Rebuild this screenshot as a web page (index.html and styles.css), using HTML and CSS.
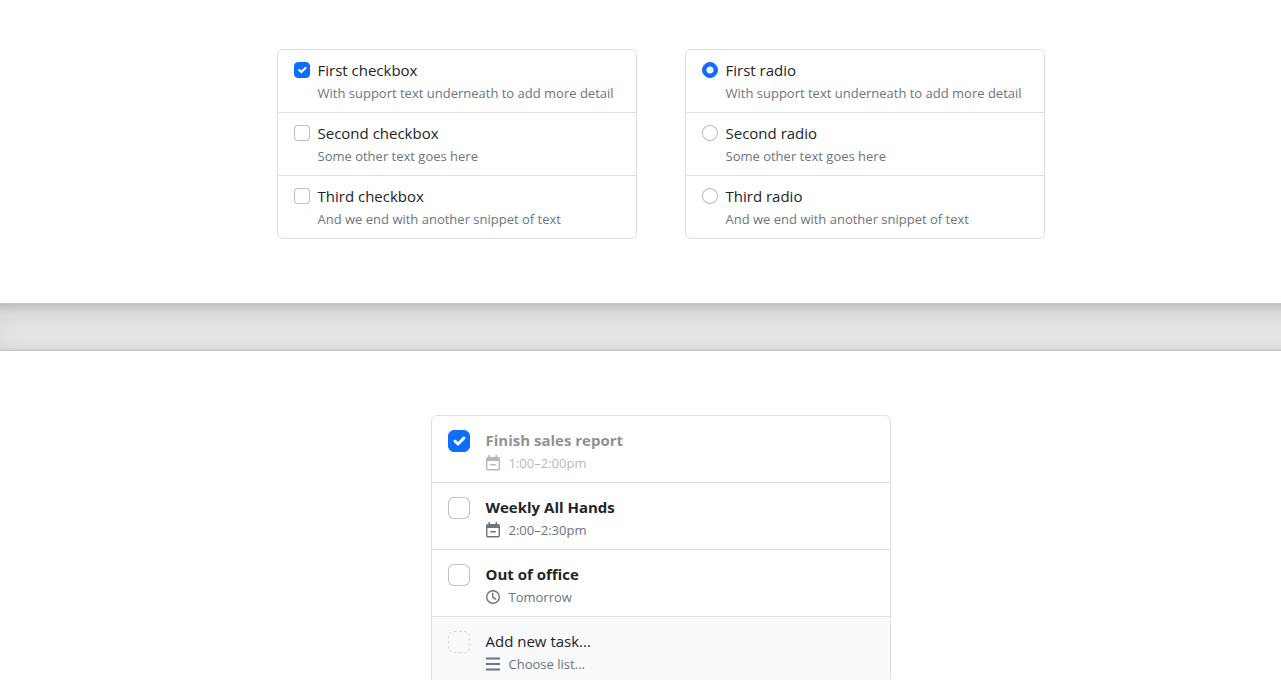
FILE: index.html
```html
<!DOCTYPE html>
<html lang="en">
<head>
<meta charset="utf-8">
<meta name="viewport" content="width=device-width, initial-scale=1">
<title>List groups</title>
<link rel="stylesheet" href="styles.css">
</head>
<body>
<svg class="symbols" aria-hidden="true">
  <symbol id="calendar" viewBox="0 0 15 16">
    <path fill-rule="evenodd" d="M2.400 0H4v2h5.500V0h1.600v2h1.200A1.700 1.700 0 0 1 14 3.700v10.100a1.700 1.700 0 0 1-1.700 1.700H1.700A1.700 1.700 0 0 1 0 13.800V3.700A1.700 1.700 0 0 1 1.700 2h.7zM1.400 6v7.600c0 .3.2.5.5.5h10.200c.3 0 .5-.2.5-.5V6z"/>
    <path d="M4.200 9h5.600v1.500H4.200z"/>
  </symbol>
  <symbol id="clock" viewBox="0 0 15 16">
    <g fill="none" stroke="currentColor" stroke-width="1.400" stroke-linecap="round" stroke-linejoin="round">
      <circle cx="7" cy="8" r="6.300"/>
      <path d="M6.800 4.200v4.200l2.900 1.700"/>
    </g>
  </symbol>
  <symbol id="list" viewBox="0 0 15 16">
    <path d="M0 1.500h14v2H0zM0 7h14v2H0zM0 12.500h14v2H0z"/>
  </symbol>
</svg>
<main class="page">
  <section class="section section-first">
    <div class="list-group">
      <label class="item"><input class="check" type="checkbox" checked><span class="content">First checkbox<small class="note">With support text underneath to add more detail</small></span></label>
      <label class="item"><input class="check" type="checkbox"><span class="content">Second checkbox<small class="note">Some other text goes here</small></span></label>
      <label class="item"><input class="check" type="checkbox"><span class="content">Third checkbox<small class="note">And we end with another snippet of text</small></span></label>
    </div>
    <div class="list-group">
      <label class="item"><input class="check radio" type="radio" name="option" checked><span class="content">First radio<small class="note">With support text underneath to add more detail</small></span></label>
      <label class="item"><input class="check radio" type="radio" name="option"><span class="content">Second radio<small class="note">Some other text goes here</small></span></label>
      <label class="item"><input class="check radio" type="radio" name="option"><span class="content">Third radio<small class="note">And we end with another snippet of text</small></span></label>
    </div>
  </section>
  <div class="divider"></div>
  <section class="section">
    <div class="list-group tasks">
      <label class="item"><input class="check" type="checkbox" checked><span class="content"><strong>Finish sales report</strong><small class="note"><svg class="icon" aria-hidden="true"><use href="#calendar"/></svg>1:00–2:00pm</small></span></label>
      <label class="item"><input class="check" type="checkbox"><span class="content"><strong>Weekly All Hands</strong><small class="note"><svg class="icon" aria-hidden="true"><use href="#calendar"/></svg>2:00–2:30pm</small></span></label>
      <label class="item"><input class="check" type="checkbox"><span class="content"><strong>Out of office</strong><small class="note"><svg class="icon" aria-hidden="true"><use href="#clock"/></svg>Tomorrow</small></span></label>
      <label class="item item-new"><input class="check" type="checkbox" disabled><span class="content"><span>Add new task...</span><small class="note"><svg class="icon" aria-hidden="true"><use href="#list"/></svg>Choose list...</small></span></label>
    </div>
  </section>
</main>
</body>
</html>
```
FILE: styles.css
```css
* {
  box-sizing: border-box;
}

body {
  margin: 0;
  height: 100vh;
  overflow: hidden;
  background: #fff;
  color: #212529;
  font-family: "Segoe UI", "Open Sans", "Noto Sans", sans-serif;
  font-size: 15px;
  line-height: 24px;
}

.symbols {
  display: none;
}

.page {
  margin: 0 -48px 0 -8px;
}

.section {
  display: flex;
  justify-content: center;
  gap: 48px;
  padding: 64px 24px;
}

.section-first {
  padding-top: 49px;
}

.list-group {
  width: 360px;
  border: 1px solid #dfdfdf;
  border-radius: 6px;
  overflow: hidden;
}

.item {
  display: flex;
  gap: 8px;
  padding: 8px 16px;
}

.item + .item {
  border-top: 1px solid #dfdfdf;
}

.content {
  flex: 1;
  white-space: nowrap;
}

.note {
  display: flex;
  align-items: center;
  color: #6c757d;
  font-size: 13px;
  line-height: 22px;
}

.check {
  appearance: none;
  flex: none;
  width: 16px;
  height: 16px;
  margin: 4px 0 0;
  border: 1px solid rgba(0, 0, 0, 0.25);
  border-radius: 4px;
  background: #fff center / contain no-repeat;
}

.radio {
  border-radius: 50%;
}

.check:checked {
  border-color: #0d6efd;
  background-color: #0d6efd;
  background-image: url("data:image/svg+xml,%3csvg xmlns='http://www.w3.org/2000/svg' viewBox='0 0 20 20'%3e%3cpath fill='none' stroke='%23fff' stroke-linecap='round' stroke-linejoin='round' stroke-width='3' d='m6 10 3 3 6-6'/%3e%3c/svg%3e");
}

.radio:checked {
  background-image: radial-gradient(circle, #fff 3px, transparent 4px);
}

.divider {
  height: 48px;
  border: solid rgba(0, 0, 0, 0.15);
  border-width: 1px 0;
  background: rgba(0, 0, 0, 0.1);
  box-shadow: inset 0 8px 24px rgba(0, 0, 0, 0.1), inset 0 2px 8px rgba(0, 0, 0, 0.15);
}

.tasks {
  width: 460px;
}

.tasks .item {
  gap: 16px;
}

.tasks .content {
  padding-top: 4px;
}

.tasks .check {
  width: 22px;
  height: 22px;
  margin-top: 6px;
  border-radius: 6px;
}

.tasks .check:checked + .content {
  opacity: 0.5;
}

.icon {
  width: 15px;
  height: 16px;
  margin-right: 8px;
  fill: currentColor;
}

.item-new {
  background: #f8f9fa;
}

.item-new .check {
  border-style: dashed;
  background: transparent;
  opacity: 0.5;
}
```
